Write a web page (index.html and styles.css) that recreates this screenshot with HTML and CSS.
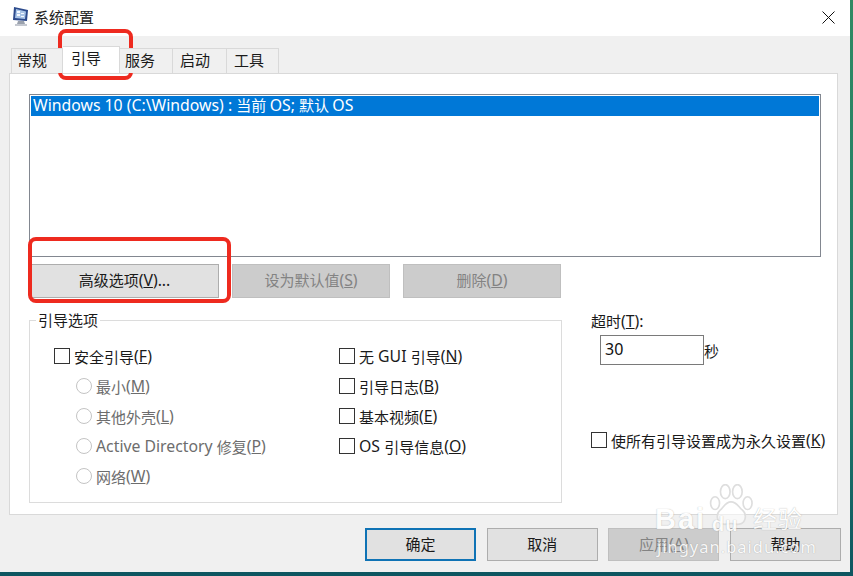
FILE: index.html
```html
<!DOCTYPE html>
<html lang="zh-CN">
<head>
<meta charset="utf-8">
<title>系统配置</title>
<link rel="stylesheet" href="styles.css">
</head>
<body>
<div class="window">
  <header class="titlebar">
    <svg class="app-icon" width="22" height="22" viewBox="0 0 22 22">
      <path d="M4 1 L18 4 L17 15 L3 14 Z" fill="#2c4a8c"/>
      <path d="M6 3 L16 5.5 L15 13 L5 12 Z" fill="#a9c4e6"/>
      <path d="M7 5h3v2H7zM7 8h3v2H7zM11 7h3v1h-3zM11 10h3v1h-3z" fill="#f4f8ff"/>
      <path d="M8 15h6l1 3H7z" fill="#9aa1ad"/>
      <path d="M5 18h12v2H5z" fill="#c4c8d0"/>
    </svg>
    <span class="title">系统配置</span>
    <svg class="close" width="13" height="13" viewBox="0 0 13 13"><path d="M.5.5l12 12M12.5.5l-12 12" stroke="#111" stroke-width="1" fill="none"/></svg>
  </header>
  <main class="content">
    <nav class="tabs">
      <span class="tab first">常规</span>
      <span class="tab active">引导</span>
      <span class="tab svc">服务</span>
      <span class="tab">启动</span>
      <span class="tab last">工具</span>
    </nav>
    <section class="panel">
      <div class="oslist"><div class="osrow"><span class="l">Windows 10 (C:\Windows) : </span>当前 <span class="l">OS; </span>默认 <span class="l">OS</span></div></div>
      <div class="actions">
        <button class="btn wide">高级选项<span class="l">(<u>V</u>)...</span></button>
        <button class="btn off">设为默认值<span class="l">(<u>S</u>)</span></button>
        <button class="btn off">删除<span class="l">(<u>D</u>)</span></button>
      </div>
      <div class="lower">
        <fieldset class="group">
          <legend>引导选项</legend>
          <div class="cols">
            <div class="col left">
              <label class="opt"><i class="box"></i>安全引导<span class="l">(<u>F</u>)</span></label>
              <label class="opt dim"><i class="radio"></i>最小<span class="l">(<u>M</u>)</span></label>
              <label class="opt dim"><i class="radio"></i>其他外壳<span class="l">(<u>L</u>)</span></label>
              <label class="opt dim"><i class="radio"></i><span class="l">Active Directory&nbsp;</span>修复<span class="l">(<u>P</u>)</span></label>
              <label class="opt dim"><i class="radio"></i>网络<span class="l">(<u>W</u>)</span></label>
            </div>
            <div class="col">
              <label class="opt"><i class="box"></i>无<span class="l">&nbsp;GUI&nbsp;</span>引导<span class="l">(<u>N</u>)</span></label>
              <label class="opt"><i class="box"></i>引导日志<span class="l">(<u>B</u>)</span></label>
              <label class="opt"><i class="box"></i>基本视频<span class="l">(<u>E</u>)</span></label>
              <label class="opt"><i class="box"></i><span class="l">OS&nbsp;</span>引导信息<span class="l">(<u>O</u>)</span></label>
            </div>
          </div>
        </fieldset>
        <aside class="side">
          <div class="tlabel">超时<span class="l">(<u>T</u>):</span></div>
          <div class="trow"><span class="tinput">30</span><span>秒</span></div>
          <label class="opt perm"><i class="box"></i>使所有引导设置成为永久设置<span class="l">(<u>K</u>)</span></label>
        </aside>
      </div>
    </section>
    <footer class="footer">
      <button class="btn foot primary">确定</button>
      <button class="btn foot">取消</button>
      <button class="btn foot off">应用<span class="l">(<u>A</u>)</span></button>
      <button class="btn foot">帮助</button>
    </footer>
  </main>
</div>
<div class="mark mark-tab"></div>
<div class="mark mark-btn"></div>
<div class="wm">
  <svg class="paw" width="46" height="44" viewBox="0 0 72 69" fill="none" stroke="#dedede" stroke-width="2.6">
    <ellipse cx="11" cy="30" rx="7" ry="10"/>
    <ellipse cx="27" cy="12" rx="7.5" ry="11"/>
    <ellipse cx="46" cy="12" rx="7.5" ry="11"/>
    <ellipse cx="62" cy="30" rx="7" ry="10"/>
    <path d="M36 28c-9 0-11 8-17 13-7 6-6 20 5 22 5 1 8-1 12-1s8 2 13 1c11-2 12-16 5-22-6-5-9-13-18-13z" fill="rgba(255,255,255,.55)"/>
  </svg>
  <span class="wm-bai">Bai</span>
  <span class="wm-du">du</span>
  <span class="wm-jy">经验</span>
  <span class="wm-url">jingyan.baidu.com</span>
</div>
</body>
</html>
```

FILE: styles.css
```css
* { box-sizing: border-box; }
html, body { margin: 0; padding: 0; }
body {
  width: 853px; height: 576px; overflow: hidden; position: relative;
  background: linear-gradient(#2f8a63, #1f7a6a 70%, #0d5560);
  font-family: "Noto Sans CJK SC", "Noto Sans", sans-serif;
  font-size: 15px; color: #1a1a1a;
}
.l { font-family: "Noto Sans", sans-serif; font-size: 15.8px; }
.window {
  width: 850px; height: 572px; background: #f0f0f0;
  display: flex; flex-direction: column;
}
.titlebar {
  height: 36px; background: #fff; flex: none;
  display: flex; align-items: center; padding: 0 15px 2px 10px;
}
.app-icon { margin-right: 2px; }
.title { font-size: 15px; color: #222; padding-bottom: 1px; }
.close { margin-left: auto; }
.content { flex: 1; padding: 12px 12px 0 9px; display: flex; flex-direction: column; }
.tabs { display: flex; height: 25px; padding-left: 2px; flex: none; position: relative; z-index: 1; }
.tab {
  width: 54px; height: 25px; background: #f0f0f0; padding: 0 0 3px 7px;
  border: 1px solid #d9d9d9; border-bottom: none; border-left: none;
  display: flex; align-items: center;
}
.tab.first { width: 52px; border-left: 1px solid #d9d9d9; padding-left: 5px; }
.tab.active {
  width: 57px; height: 27px; margin-top: -2px; background: #fff;
  padding: 0 0 5px 8px;
}
.tab.svc { width: 53px; padding-left: 5px; }
.tab.last { width: 52px; }
.panel {
  height: 442px; flex: none; background: #fff; border: 1px solid #d9d9d9;
  padding: 20px 16px 0 19px;
}
.oslist {
  height: 163px; width: 792px; border: 1px solid #828790; padding: 1px;
}
.osrow {
  height: 20px; background: #0078d7; color: #fff; line-height: 18px; padding-left: 2px;
  white-space: nowrap;
}
.actions { display: flex; gap: 13px; margin-top: 7px; padding-left: 1px; }
.btn {
  font: inherit; color: #1a1a1a; height: 34px; width: 158px; padding: 0 0 3px;
  background: #e1e1e1; border: 1px solid #adadad; border-radius: 0;
  display: flex; align-items: center; justify-content: center;
}
.btn.wide { width: 189px; }
.btn.off { background: #cccccc; border-color: #bfbfbf; color: #838383; }
.lower { display: flex; margin-top: 14px; }
.group {
  margin: 0; width: 533px; height: 191px; border: 1px solid #dcdcdc; padding: 0; flex: none;
}
.group legend { padding: 0 2px; margin-left: 6px; line-height: 16px; }
.cols { display: flex; padding: 18px 0 0 24px; }
.col { display: flex; flex-direction: column; gap: 10px; }
.col.left { width: 285px; }
.opt { display: flex; align-items: center; height: 20px; white-space: nowrap; }
.box { width: 16px; height: 16px; border: 1px solid #333; background: #fff; margin-right: 4px; flex: none; }
.radio {
  width: 16px; height: 16px; border: 1px solid #c4c4c4; border-radius: 50%;
  margin: 0 4px 0 22px; flex: none;
}
.dim { color: #6d6d6d; }
.side { margin-left: 29px; display: flex; flex-direction: column; }
.tlabel { height: 20px; line-height: 20px; margin-top: -1px; }
.trow { display: flex; align-items: center; margin: 4px 0 0 9px; }
.tinput {
  width: 104px; height: 30px; border: 1px solid #7a7a7a; padding-left: 4px; line-height: 26px;
  font-family: "Noto Sans", sans-serif; font-size: 16px; color: #111;
}
.perm { margin-top: 65px; }
.footer { display: flex; gap: 10.67px; padding: 13px 0 0 356px; width: 850px; }
.btn.foot { width: 111px; height: 33px; flex: none; padding-bottom: 2px; }
.btn.primary { border: 2px solid #0f73b5; }
.mark { position: absolute; border: 4.5px solid #ee2a1f; border-radius: 8px; }
.mark-tab { left: 58px; top: 29px; width: 75px; height: 51px; }
.mark-btn { left: 28px; top: 237px; width: 203px; height: 66px; }
.wm { position: absolute; left: 650px; top: 478px; width: 200px; height: 90px; color: #fff; }
.wm span { position: absolute; white-space: nowrap; text-shadow: 0 0 1px rgba(110,110,110,.65); opacity: .85; }
.paw { position: absolute; left: 58px; top: 6px; }
.wm-bai { left: 5px; top: 26px; font: 700 29px/30px "Liberation Sans", sans-serif; letter-spacing: 2px; }
.wm-du { left: 62px; top: 34px; font: 700 20px/24px "Liberation Sans", sans-serif; letter-spacing: 1px; }
.wm-jy { left: 103px; top: 25px; font: 400 24px/30px "Noto Sans CJK SC", sans-serif; letter-spacing: 1px; }
.wm-url { left: 7px; top: 56px; font: 400 16.5px/26px "Noto Sans", sans-serif; letter-spacing: 1px; }
```
